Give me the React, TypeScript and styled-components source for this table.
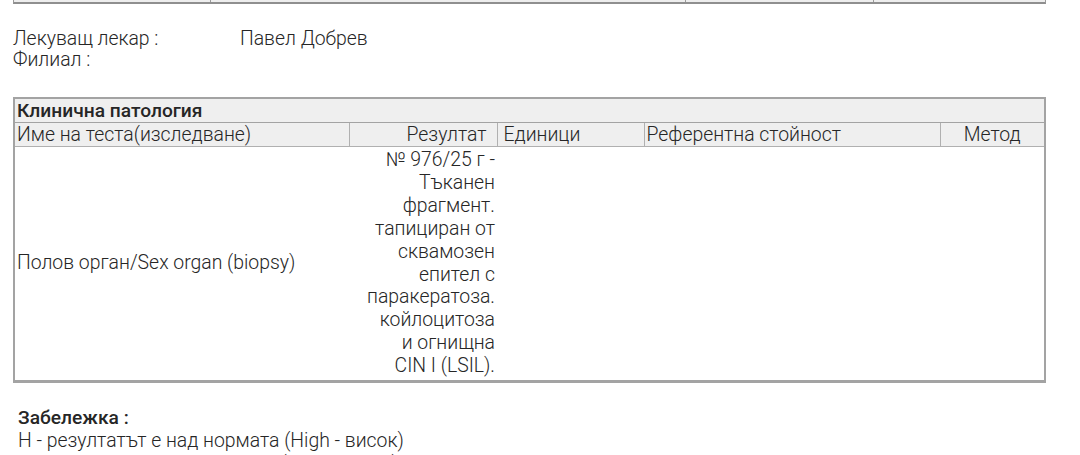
import styled, { createGlobalStyle } from "styled-components";

const GlobalStyle = createGlobalStyle`
  body {
    margin: 0;
    background: #ffffff;
    font-family: Roboto, "Liberation Sans", sans-serif;
    font-weight: 300;
    color: #262626;
  }
`;

const Page = styled.div`
  width: 1080px;
  height: 455px;
  overflow: hidden;
  padding: 0 0 0 13px;
  box-sizing: border-box;
`;

const PrevTable = styled.div`
  display: grid;
  grid-template-columns: 197px 475px 188px 1fr;
  width: 1031px;
  height: 2px;
  background: #eeeeee;
  border-left: 1px solid #9a9a9a;
  border-right: 1px solid #9a9a9a;
  border-bottom: 2px solid #8f8f8f;
  box-sizing: content-box;
`;

const PrevCell = styled.div`
  border-right: 1px solid #9a9a9a;
  &:last-child {
    border-right: none;
  }
`;

const Info = styled.div`
  display: grid;
  grid-template-columns: 227px auto;
  margin-top: 24px;
  font-size: 19.4px;
  line-height: 21px;
`;

const Table = styled.table`
  margin-top: 27px;
  width: 1031px;
  table-layout: fixed;
  border-collapse: collapse;
  border: 2px solid #a3a3a3;
  border-bottom-width: 3px;
  font-size: 19.4px;
  line-height: 22.9px;
`;

const Caption = styled.th`
  background: #efefef;
  border: 1px solid #a3a3a3;
  text-align: left;
  font-weight: 500;
  font-size: 19.2px;
  padding: 0 2px;
  height: 23px;
  line-height: 22px;
`;

const Head = styled.th<{ $align?: string; $pl?: number; $pr?: number }>`
  background: #efefef;
  border: 1px solid #b0b0b0;
  font-weight: 300;
  text-align: ${(p) => p.$align || "left"};
  padding: 0 ${(p) => p.$pr ?? 2}px 0 ${(p) => p.$pl ?? 2}px;
  height: 23px;
  line-height: 22px;
  white-space: nowrap;
  overflow: hidden;
`;

const Cell = styled.td<{ $align?: string; $pl?: number }>`
  text-align: ${(p) => p.$align || "left"};
  vertical-align: middle;
  padding: 2px 2px 2px ${(p) => p.$pl ?? 2}px;
  border: none;
`;

const Note = styled.div`
  margin: 23px 0 0 5px;
  font-size: 19.4px;
  line-height: 23px;
`;

const NoteTitle = styled.div`
  font-weight: 500;
  font-size: 19.2px;
`;

const columns = [335, 148, 147, 296, 105];

export default function App() {
  return (
    <Page>
      <GlobalStyle />
      <PrevTable>
        <PrevCell />
        <PrevCell />
        <PrevCell />
        <PrevCell />
      </PrevTable>
      <Info>
        <div>Лекуващ лекар :</div>
        <div>Павел Добрев</div>
        <div>Филиал :</div>
        <div />
      </Info>
      <Table>
        <colgroup>
          {columns.map((w, i) => (
            <col key={i} style={{ width: w }} />
          ))}
        </colgroup>
        <thead>
          <tr>
            <Caption colSpan={5}>Клинична патология</Caption>
          </tr>
          <tr>
            <Head>Име на теста(изследване)</Head>
            <Head $align="right" $pr={10}>
              Резултат
            </Head>
            <Head $pl={6}>Единици</Head>
            <Head>Референтна стойност</Head>
            <Head $align="center">Метод</Head>
          </tr>
        </thead>
        <tbody>
          <tr>
            <Cell>Полов орган/Sex organ (biopsy)</Cell>
            <Cell $align="right" $pl={18}>
              № 976/25 г - Тъканен фрагмент. тапициран от сквамозен епител с
              паракератоза. койлоцитоза и огнищна CIN I (LSIL).
            </Cell>
            <Cell />
            <Cell />
            <Cell />
          </tr>
        </tbody>
      </Table>
      <Note>
        <NoteTitle>Забележка :</NoteTitle>
        <div>Н - резултатът е над нормата (High - висок)</div>
        <div>L - резултатът е под нормата (Low - нисък)</div>
      </Note>
    </Page>
  );
}
